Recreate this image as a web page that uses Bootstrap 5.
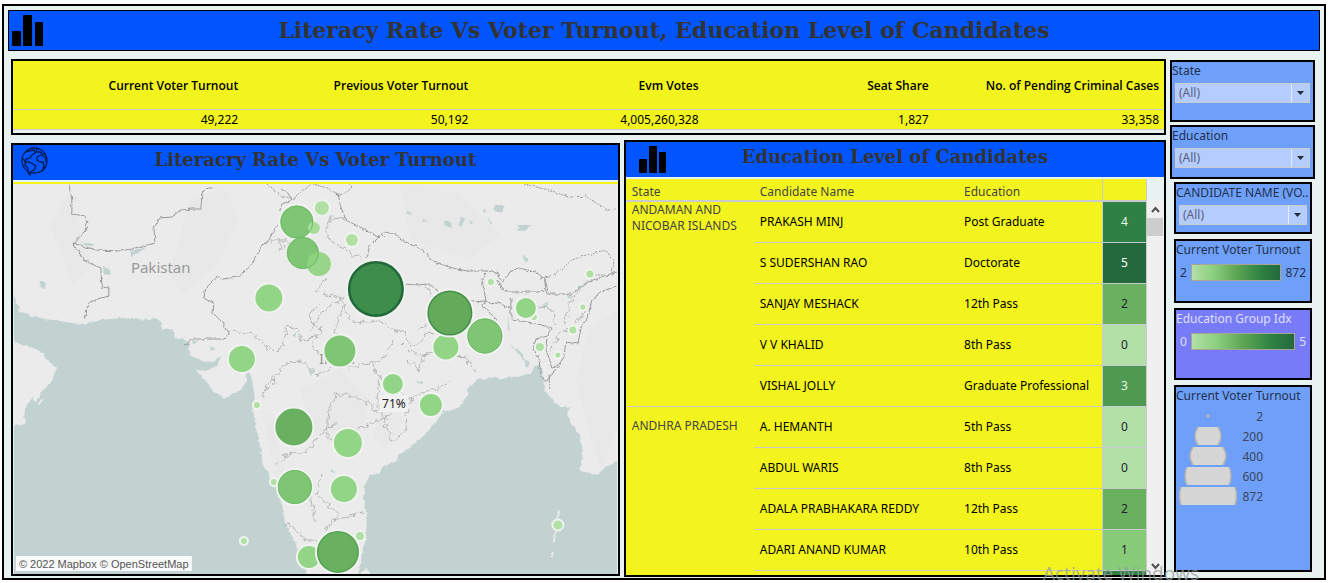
<!DOCTYPE html>
<html lang="en">
<head>
<meta charset="utf-8">
<meta name="viewport" content="width=device-width, initial-scale=1">
<title>Literacy Rate Vs Voter Turnout</title>
<link href="https://cdn.jsdelivr.net/npm/bootstrap@5.3.0/dist/css/bootstrap.min.css" rel="stylesheet">
<style>
  body { font: 12px/16px "Noto Sans", sans-serif; color: #333; background: #fff; }
  .frame { margin: 4px 5px 0 2px; border: 2px solid #000; padding: 4px 4px 1px; background: #e8f2f1; }
  .bar { background: #05f; color: #333; }
  .bar h1, .bar h2 { font-family: Georgia, "DejaVu Serif", serif; font-weight: 700; margin: 0; padding-right: 40px; }
  .main-bar { height: 41px; border: 1px solid #000; }
  .main-bar h1 { font-size: 22px; line-height: 39px; }
  .panel-bar { height: 35px; margin-bottom: 2px; }
  .panel-bar h2 { font-size: 18px; line-height: 30px; }
  .bar-icon { width: 40px; flex: none; }
  .boxed { border: 2px solid #000; }
  .content { margin: 8px 5px 0 3px; gap: 4px; }
  .left { gap: 5px; min-width: 0; }
  .views { gap: 4px; }
  .kpi { table-layout: fixed; width: 100%; margin-bottom: 3px; background: #f3f41d; color: #000; text-align: right; }
  .kpi th, .kpi td { padding: 0 5px 0 0; border-bottom: 1px solid #c9c9d0; }
  .kpi th { height: 48px; padding-top: 3px; font-family: "Open Sans", "Noto Sans", sans-serif; font-weight: 600; }
  .kpi td { height: 20px; line-height: 19px; }
  .map-view { flex: 609 1 0; min-width: 0; margin: 3px 0 1px; }
  .table-view { flex: 542 1 0; min-width: 0; }
  .map { border-top: 2px solid #f3f41d; padding: 0 1px; }
  .map svg { display: block; width: 100%; height: 390px; background: #c1d2d1; }
  .scroll-area { height: 396px; overflow: hidden; }
  .cand { table-layout: fixed; width: 100%; border-collapse: separate; border-spacing: 0; background: #f3f41d; color: #000; }
  .cand th, .cand td { padding: 0 6px; border-bottom: 1px solid #c9c9d0; font-weight: 400; }
  .cand thead th { height: 23px; border-bottom-width: 2px; color: #444; padding-top: 5px; }
  .cand tbody tr { height: 41px; }
  .cand tbody th { vertical-align: top; color: #444; }
  .cand tbody .st-mid { padding-top: 11px; }
  .cand td:last-child, .cand thead th:last-child { border-left: 1px solid #c9c9d0; border-right: 1px solid #c9c9d0; text-align: center; }
  .g0 { background: #b3e0a6; } .g1 { background: #88cc79; } .g2 { background: #69b05f; }
  .g3 { background: #4f9a51; color: #e8f2e8; } .g4 { background: #2f8143; color: #e8f2e8; } .g5 { background: #24693b; color: #fff; }
  .g0, .g1, .g2 { color: #223; }
  .track { width: 17px; flex: none; margin-top: 22px; background: #f0f0f0; }
  .track svg { display: block; margin: 0 auto; }
  .thumb { height: 18px; background: #cdcdcd; margin-right: 1px; }
  .side { width: 145px; flex: none; gap: 3px; margin-top: 1px; }
  .side .boxed { background: #6fa0f9; color: #22304d; line-height: 18px; }
  .lower { margin: 0 3px 0 4px; gap: 5px; }
  .s-state { height: 62px; } .s-edu { height: 54px; } .s-cand { height: 52px; }
  .s-turn { height: 64px; } .s-idx { height: 72px; } .s-size { height: 187px; }
  .side .s-idx { background: #777bf8; color: #dfe0ff; }
  .side label { display: block; }
  .pick { display: block; width: calc(100% - 6px); height: 20px; margin: 3px; padding: 0 3px; border: 1px solid #ccc; border-radius: 0; appearance: none; color: #56617a; font-size: 12px;
    background: #b5ccff url("data:image/svg+xml,%3Csvg xmlns='http://www.w3.org/2000/svg' width='18' height='18'%3E%3Cpath d='M0 0v18' stroke='%23e6eefc' stroke-width='2'/%3E%3Cpath d='M6 7h7l-3.500 4z' fill='%23222b3a'/%3E%3C/svg%3E") no-repeat right center; }
  .ramp { flex: 1; height: 17px; border: 1px solid #a9a595; background: linear-gradient(90deg, #b3e0a6, #8ace7e 25%, #5ea654 50%, #2e8243 78%, #24693d); }
  .legend { gap: 4px; padding: 5px 4px; line-height: 17px; }
  .map-text { fill: #999; font-size: 15px; }
  .watermark { position: absolute; left: 1043px; top: 563px; white-space: nowrap; font: 19px/20px "Open Sans", sans-serif; color: rgba(150,155,155,.75); pointer-events: none; }
</style>
</head>
<body>
<main class="frame">
  <header class="bar main-bar d-flex">
    <svg class="bar-icon" height="39" viewBox="0 0 40 39"><g><rect x="3" y="20" width="9" height="15" rx="1"/><rect x="14" y="4" width="9" height="31" rx="1"/><rect x="26" y="11" width="8" height="24" rx="1"/></g></svg>
    <h1 class="flex-grow-1 text-center">Literacy Rate Vs Voter Turnout, Education Level of Candidates</h1>
  </header>

  <div class="content d-flex">
    <div class="left d-flex flex-column flex-grow-1">
      <section class="boxed">
        <table class="kpi">
          <thead><tr><th>Current Voter Turnout</th><th>Previous Voter Turnout</th><th>Evm Votes</th><th>Seat Share</th><th>No. of Pending Criminal Cases</th></tr></thead>
          <tbody><tr><td>49,222</td><td>50,192</td><td>4,005,260,328</td><td>1,827</td><td>33,358</td></tr></tbody>
        </table>
      </section>

      <div class="views d-flex">
        <section class="map-view boxed">
          <div class="bar panel-bar d-flex">
            <svg class="bar-icon" height="35" viewBox="0 0 40 35" fill="none" stroke="#001a55" stroke-width="1.300"><circle cx="21.500" cy="15.500" r="12.500"/><path d="M12 7l4-1 5-1 1 3-3 2-2 3-4 1-1 3 4 0 4 2 3 2-2 4-2 1-2 4-2-2 0-5-3-3 1-3-4-4M24 4l-1 3 4 0 3 2 3 0M24 12l4-2 4 2 1 4-1 0M24 12l0 3 3 2 3 0 1 3-1 5 3-3"/></svg>
            <h2 class="flex-grow-1 text-center">Literacry Rate Vs Voter Turnout</h2>
          </div>
          <div class="map">
            <svg viewBox="14 184 603 390" preserveAspectRatio="xMidYMid slice" role="img" aria-label="Voter turnout by state">
              <defs>
                <filter id="rough" filterUnits="userSpaceOnUse" x="0" y="170" width="640" height="420"><feTurbulence type="fractalNoise" baseFrequency=".16" numOctaves="2" seed="4"/><feDisplacementMap in="SourceGraphic" scale="9" xChannelSelector="R" yChannelSelector="G"/></filter>
                <filter id="coast" filterUnits="userSpaceOnUse" x="0" y="170" width="640" height="420"><feTurbulence type="fractalNoise" baseFrequency=".2" numOctaves="2" seed="7"/><feDisplacementMap in="SourceGraphic" scale="4" xChannelSelector="R" yChannelSelector="G"/></filter>
              </defs>
              <!-- land -->
              <g fill="#ebebeb" filter="url(#coast)">
                <path d="M4 174H627V458L617 462 605 467 598 475 590 473 580 471 583 450 580 435 571 422 567 412 571 408 560 407 550 398 544 388 543 372 539 364 535 366 530 374 520 376 500 379 490 377 484 380 480 378 475 382 467 388 468 395 458 408 445 412 435 423 425 435 410 447 398 455 398 460 384 466 378 474 370 475 365 485 364 500 367 515 366 540 362 552 361 566 352 584H309L305 565 299 549 293 538 285 522 282 505 277 490 272 480 263 465 261 450 257 432 253 408 255 398 252 380 249 371 246 374 246 382 241 390 225 398 215 392 205 380 196 370 206 371 216 366 222 356 213 362 203 361 190 355 188 348 191 344 185 340 175 337 172 329 161 329 161 322 155 317 150 320 135 319 120 318 112 319 100 320 90 323 82 325 60 321 45 319 32 316 20 312 17 303 14 294 4 290z"/>
                <path d="M4 338l10 3 8 4 15 4 6 4 5 8 9 8-7 14-8 9-6 11-4-5-5 7-3 8 2 11-24 4z"/>
                <path d="M362 571l5-2 4 5h-10zM559 510l1 3-2 9-1-6zM556 532l-1 10-2 1 1-10zM551 553h2v4h-2zM38 404l4-6 1 1-3 6z"/>
              </g>
              <!-- terrain -->
              <g fill="#e4e4e4" opacity=".4">
                <path d="M190 200l35-12 14 30-20 45-35 30-15-18zM400 184l60 10 40 40-30 25-60-20zM300 390l40-20 30 30-10 30-45 5zM262 410l12 5 14 80-6 8-12-50zM385 400l20 20-20 30-12-15zM575 380l15-50 27-20v120l-16 40-12-40zM50 225l18-30 25 70-20 20z"/>
              </g>
              <!-- lakes and rivers -->
              <g fill="#c1d2d1" filter="url(#coast)">
                <path d="M74 194l3 6-2-1zM83 243l10 1v2l-8-1zM131 251l16-4-8 6-8 3zM103 266l9 5-2 4-6-1zM40 281l6 1-1 7-5-2zM406 211l7 1-2 3-4-1zM422 219l7 2-6 1zM444 221l8 2-1 5-6-2zM461 217l5 3-5 7-2-1zM470 219l4 3-4 3zM482 209l5 1-4 2zM496 204l9 3-4 6-8-3zM486 217l7 6-2 0zM518 225l13 0-6 5-6 1zM523 255l7 3-6 4zM210 346l6 4-5 1zM191 342l8-2-4 4zM308 369l7 1-4 6zM417 380l7 2-4 2zM580 286l18-11-12 8-7 10zM568 295l7 1-5 2zM541 307l8-6-3 5zM508 315l2 17-2-2zM511 345l12 8 3 12-6-10zM332 423l5 0 1 3zM331 468l5 4-5-1zM293 336l4-5-2 8zM524 359l6 4-2 6zM441 412l6-2-5 4z"/>
              </g>
              <!-- national borders -->
              <g fill="none" stroke="#999" stroke-linejoin="round" filter="url(#coast)">
                <path d="M69 184l3 17v13l13 2 3 6-3 9-12 13 12 17 16 7 1 19 7 1v8l-11 3-9 4-5 16M73 243l23 7 26 1 14-3 19-5-1-15 6-10 11-1 10-7 12-1 8 0 1-16 5-5h6"/>
                <path d="M278 224l-7 11-2 5-6 5-12 20-6 5-6 7-16 2-5-3-12 12-2 10 10 6-1 9 10 10 6 12-5 4-33 0-4 5-3 1M280 210l2-6 10-4-4-7-7-4M338 193l3 14 5 13 18 9 14 8 6-5 12 2 10 8 17 8 8 10 12 5 10 3 14 3h20l6 1 6 2 3 8 8-10 9-4 17 4 9 7 3 12-11 1-31 0-5-5-4-8M379 237l-9 9-4 12M385 238l-4-4M406 284l10 1 12-1 8 4 6 9M472 302l13-1 5 2 7-1 12 6M486 273l-4 6 4 21-3 6 15 15M511 298v22l24 3 16 5-3 8-12 3-3 10 6 8 2 20 6 5 6-10 7-6M547 294h24l10-7 12-7 18-6 6-2M546 294l-1-15M617 286l-17 6-8 9-5 18-5 5-4 20-12-2-2 15-6 9-6 1-6-18 1-10M550 389l-1-15"/>
                <path stroke-dasharray="2 1" d="M266 184l14 11 14 5 6-8 12-8 16 4 12 8 12-8-2-4M524 184l25 6 20 7 17-1 14 9 8 5 9-1M540 279l10-2 12-8 10-9 15-5 20-4 7 10-2 15M609 275l-14 0"/>
              </g>
              <!-- state borders -->
              <g fill="none" stroke="#a6a6a6" stroke-width=".8" stroke-linejoin="round" filter="url(#rough)">
                <path d="M270 241h18M280 241v10l5-7M228 331l20 2 14 8 5 7 11 5 6-12 3-15 10 3 5 14 13-8 4 4M311 310l-2 10 12 12-8 10 4 12M309 313l12-8M330 219l-4 12 6 12 15 6 16 12M326 276l-5 11-4 6M330 218l15 1M310 330l14-20 20-12M324 293l9 3 12 8 5 17 10 2 20-2 12 8 12 2 6 13 8 1 9-12 6-2M344 304l-6 16-3 12 6 8M404 345l12 10 14-1M425 285l8 12-2 14M418 330l14-8M275 385l-1-9 11-13 20-1 12 13 18-10 14 2 20-4 10 10-2 30 6 6-6 5-7-10-20-8-13-3-8 16-2 30 16 2 8-7 14-9 24-8 6-8 10-5 18-12 16-4 10-6M275 378l-14 18M276 463l12-8 20-5 14-17 14-10M322 475l-5 20 9 8 12 10-4 8-10 8M372 402l10 10 10 30 14-12 1-20-10-25M386 384l-16-20 14-6 10-18M406 360l14 10 6-18 14-1 14 5 12 2 10 14M450 360l18-4M284 522l12 9 12 10h20M326 530l10-10 30-9M524 290l12 15 16 5 4 15M552 350l5-14 18-10 10-15M580 290l-10 12-5 22M315 520l-10-50"/>
              </g>
              <text class="map-text" x="131" y="273">Pakistan</text>
              <text class="map-text" x="337" y="364" text-anchor="middle">India</text>
              <!-- turnout circles -->
              <g stroke="#f0f3ef" stroke-width="2">
                <g fill="#b0e0a3">
                  <circle cx="491" cy="282" r="4"/><circle cx="590" cy="274" r="4.500"/><circle cx="583" cy="307" r="3.500"/><circle cx="573" cy="330" r="4.500"/><circle cx="540" cy="347" r="5"/><circle cx="558" cy="355" r="3.500"/><circle cx="257" cy="405" r="4"/><circle cx="274" cy="482" r="4"/><circle cx="360" cy="536" r="5"/><circle cx="244" cy="541" r="4"/><circle cx="558" cy="525" r="5.500"/><circle cx="534" cy="317" r="4"/><circle cx="322" cy="208" r="8"/><circle cx="352" cy="240" r="7"/>
                </g>
                <g fill="#93d586">
                  <circle cx="269" cy="298" r="14.500"/><circle cx="242" cy="359" r="14"/><circle cx="526" cy="308" r="11"/><circle cx="446" cy="347" r="13.500"/><circle cx="393" cy="384" r="11"/><circle cx="431" cy="405" r="12"/><circle cx="348" cy="443" r="15"/><circle cx="344" cy="489" r="14"/><circle cx="309" cy="557" r="12"/>
                </g>
                <g fill="#7fc674"><circle cx="297" cy="222" r="17.500"/><circle cx="340" cy="351" r="16.500"/><circle cx="485" cy="336" r="18.500"/><circle cx="295" cy="487" r="18"/></g>
                <circle cx="294" cy="427" r="19.500" fill="#6ab061"/>
                <circle cx="450" cy="313" r="23.500" fill="#45914b"/>
                <circle cx="376" cy="289" r="29" fill="#24693d"/>
                <circle cx="338" cy="552" r="22" fill="#57a153"/>
              </g>
              <circle cx="314" cy="228" r="6" fill="#a7dd99"/>
              <circle cx="303" cy="253" r="16" fill="#7fc674"/>
              <circle cx="319" cy="264" r="12" fill="#8fd381" fill-opacity=".9"/>
              <circle cx="450" cy="313" r="21" fill="#63aa5b"/>
              <circle cx="376" cy="289" r="25.500" fill="#3d8d4b"/>
              <circle cx="338" cy="552" r="19.500" fill="#69b05f"/>
              <g fill="none" stroke="#6fbb68" stroke-width="1"><circle cx="297" cy="222" r="16"/><circle cx="303" cy="253" r="15.500"/><circle cx="485" cy="336" r="17"/><circle cx="295" cy="487" r="16.500"/></g>
              <rect x="380" y="395" width="28" height="17" fill="#f1f1f1"/>
              <text x="394" y="408" text-anchor="middle" font-size="12" fill="#222">71%</text>
              <rect x="16" y="556" width="176" height="15" fill="#fafafa"/>
              <text x="19" y="568" font-size="11" fill="#555" font-family="Liberation Sans, sans-serif">© 2022 Mapbox © OpenStreetMap</text>
            </svg>
          </div>
        </section>

        <section class="table-view boxed">
          <div class="bar panel-bar d-flex">
            <svg class="bar-icon" height="35" viewBox="0 0 40 35"><rect x="13" y="17" width="8" height="14" rx="1"/><rect x="23" y="4" width="8" height="27" rx="1"/><rect x="33" y="10" width="7" height="21" rx="1"/></svg>
            <h2 class="flex-grow-1 text-center">Education Level of Candidates</h2>
          </div>
          <div class="scroll-area d-flex">
            <div class="flex-grow-1">
              <table class="cand">
                <colgroup><col style="width:128px"><col><col style="width:144px"><col style="width:45px"></colgroup>
                <thead><tr><th>State</th><th>Candidate Name</th><th>Education</th><th></th></tr></thead>
                <tbody>
                  <tr><th rowspan="5">ANDAMAN AND NICOBAR ISLANDS</th><td>PRAKASH MINJ</td><td>Post Graduate</td><td class="g4">4</td></tr>
                  <tr><td>S SUDERSHAN RAO</td><td>Doctorate</td><td class="g5">5</td></tr>
                  <tr><td>SANJAY MESHACK</td><td>12th Pass</td><td class="g2">2</td></tr>
                  <tr><td>V V KHALID</td><td>8th Pass</td><td class="g0">0</td></tr>
                  <tr><td>VISHAL JOLLY</td><td class="text-nowrap">Graduate Professional</td><td class="g3">3</td></tr>
                  <tr><th rowspan="5" class="st-mid">ANDHRA PRADESH</th><td>A. HEMANTH</td><td>5th Pass</td><td class="g0">0</td></tr>
                  <tr><td>ABDUL WARIS</td><td>8th Pass</td><td class="g0">0</td></tr>
                  <tr><td>ADALA PRABHAKARA REDDY</td><td>12th Pass</td><td class="g2">2</td></tr>
                  <tr><td>ADARI ANAND KUMAR</td><td>10th Pass</td><td class="g1">1</td></tr>
                  <tr><td></td><td></td><td class="g4"></td></tr>
                </tbody>
              </table>
            </div>
            <div class="track d-flex flex-column">
              <svg width="17" height="17" fill="none" stroke="#505050" stroke-width="2"><path d="M5 11l3.500-4 3.500 4"/></svg>
              <div class="thumb"></div>
              <svg class="mt-auto" width="17" height="17" fill="none" stroke="#505050" stroke-width="2"><path d="M5 6l3.500 4 3.500-4"/></svg>
            </div>
          </div>
        </section>
      </div>
    </div>

    <aside class="side d-flex flex-column">
      <section class="boxed s-state"><label for="state">State</label><select class="pick" id="state"><option>(All)</option></select></section>
      <section class="boxed s-edu"><label for="edu">Education</label><select class="pick" id="edu"><option>(All)</option></select></section>
      <div class="lower d-flex flex-column">
        <section class="boxed s-cand"><label for="cname" class="text-nowrap overflow-hidden">CANDIDATE NAME (VO..</label><select class="pick" id="cname"><option>(All)</option></select></section>
        <section class="boxed s-turn"><div>Current Voter Turnout</div><div class="legend d-flex"><span>2</span><div class="ramp"></div><span>872</span></div></section>
        <section class="boxed s-idx"><div>Education Group Idx</div><div class="legend d-flex"><span>0</span><div class="ramp"></div><span>5</span></div></section>
        <section class="boxed s-size">
          <div>Current Voter Turnout</div>
          <svg width="100%" height="104" viewBox="0 0 134 104" preserveAspectRatio="xMinYMin" fill="#d6d6d6" stroke="#b3b3b3">
            <circle cx="32" cy="11" r="2" fill="#b3b3b3" stroke="none"/>
            <path stroke="none" d="M22 22h20q6 9 0 18H22q-6-9 0-18zM17 42h30q6 9 0 18H17q-6-9 0-18zM11 62h42q4 9 0 18H11q-4-9 0-18zM5 82h54q3 9 0 18H5q-3-9 0-18z"/>
            <path fill="none" stroke-width="1.500" d="M22 22q-6 9 0 18M42 22q6 9 0 18M17 42q-6 9 0 18M47 42q6 9 0 18M11 62q-4 9 0 18M53 62q4 9 0 18M5 82q-3 9 0 18M59 82q3 9 0 18"/>
            <g fill="#3b4660" stroke="none" text-anchor="end" font-size="12"><text x="87" y="16">2</text><text x="87" y="36">200</text><text x="87" y="56">400</text><text x="87" y="76">600</text><text x="87" y="96">872</text></g>
          </svg>
        </section>
      </div>
    </aside>
  </div>
</main>
<div class="watermark">Activate Windows</div>
<script src="https://cdn.jsdelivr.net/npm/bootstrap@5.3.0/dist/js/bootstrap.bundle.min.js"></script>
</body>
</html>
